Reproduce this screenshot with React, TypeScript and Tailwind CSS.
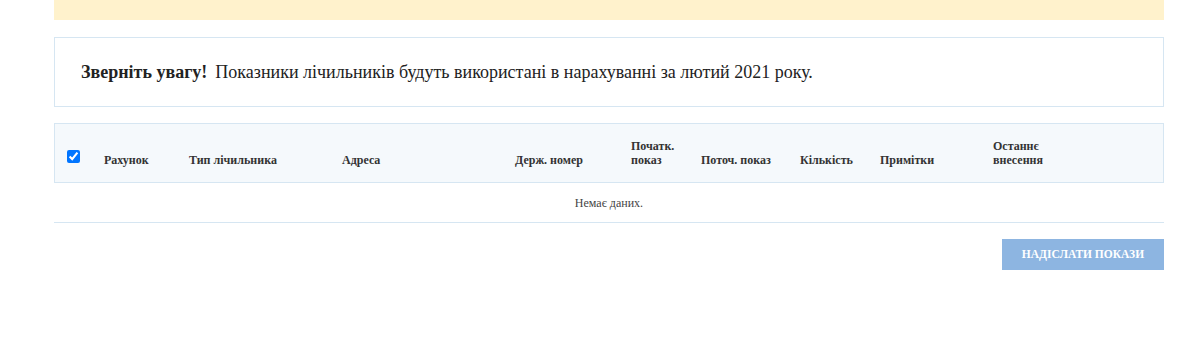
const columns = [
  "Рахунок",
  "Тип лічильника",
  "Адреса",
  "Держ. номер",
  "Початк. показ",
  "Поточ. показ",
  "Кількість",
  "Примітки",
  "Останнє внесення",
];

export default function App() {
  return (
    <div className="w-[1198px] h-[354px] bg-white font-['Liberation_Serif',serif] text-[#222]">
      <div className="mx-[54px] w-[1110px]">
        <div className="h-[20px] bg-[#fff2cc]" />

        <div className="mt-[17px] h-[70px] border border-[#d6e6f2] flex items-center px-[26px] text-[18px]">
          <span className="font-bold">Зверніть увагу!</span>
          <span className="ml-[8px]">
            Показники лічильників будуть використані в нарахуванні за лютий 2021 року.
          </span>
        </div>

        <div className="mt-[16px] h-[60px] border border-[#d6e6f2] bg-[#f5f9fc] grid grid-cols-[49px_85px_153px_173px_116px_70px_99px_80px_113px_1fr] items-end pb-[15px] text-[12px] leading-[14px] font-bold text-[#333]">
          <div className="pl-[12px] flex items-center pb-[4px]">
            <input
              type="checkbox"
              defaultChecked
              className="w-[13px] h-[13px] accent-[#0075ff]"
            />
          </div>
          {columns.map((c) => (
            <div key={c} className={c === "Початк. показ" || c === "Останнє внесення" ? "w-[60px]" : ""}>
              {c}
            </div>
          ))}
        </div>

        <div className="h-[40px] border-b border-[#d6e6f2] flex items-center justify-center text-[12px] text-[#444]">
          Немає даних.
        </div>

        <div className="mt-[16px] flex justify-end">
          <button className="w-[162px] h-[31px] bg-[#8db5e1] text-white text-[11.5px] font-bold uppercase">
            Надіслати покази
          </button>
        </div>
      </div>
    </div>
  );
}
